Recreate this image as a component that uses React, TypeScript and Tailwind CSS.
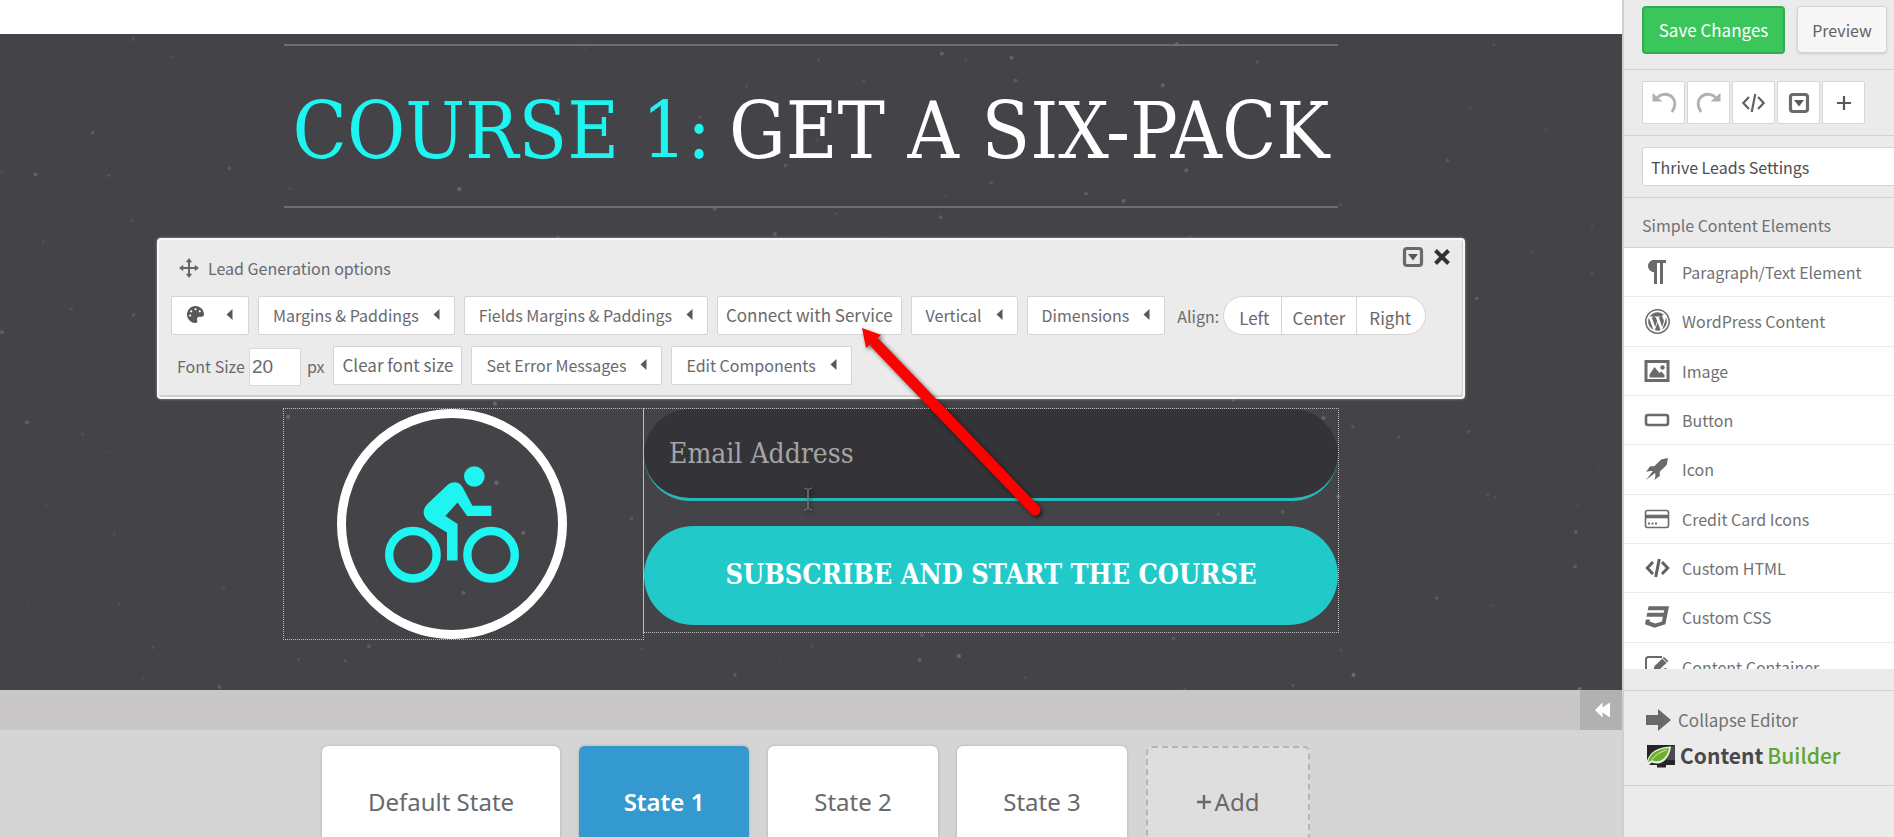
import type { ReactNode } from "react";
import { FaPalette } from "react-icons/fa";
import { ImCss3, ImPilcrow, ImRocket, ImWordpress } from "react-icons/im";

const SPECKS = Array.from({ length: 230 }, (_, i) => {
  const a = Math.abs(Math.sin(i * 12.9898) * 43758.5453) % 1;
  const b = Math.abs(Math.sin(i * 78.233) * 12345.6789) % 1;
  const c = Math.abs(Math.sin(i * 37.719) * 9876.5432) % 1;
  return { x: a * 100, y: b * 100, r: 0.8 + c * 1.4, o: 0.04 + c * c * 0.16 };
});

function Specks() {
  return (
    <svg className="absolute inset-0 h-full w-full" aria-hidden="true">
      {SPECKS.map((s, i) => (
        <circle key={i} cx={`${s.x}%`} cy={`${s.y}%`} r={s.r} fill="#fff" opacity={s.o} />
      ))}
    </svg>
  );
}

function CaretLeft() {
  return (
    <svg width="7" height="11" viewBox="0 0 7 11" fill="#58585a" aria-hidden="true">
      <path d="M6.5 0v11L0.5 5.5z" />
    </svg>
  );
}

function BoxedArrow() {
  return (
    <svg width="22" height="22" viewBox="0 0 22 22" aria-hidden="true">
      <rect x="2.5" y="2.5" width="17" height="17" rx="2.5" fill="none" stroke="#6a6a6c" strokeWidth="3.2" />
      <path d="M6 8h10l-5 6.5z" fill="#58585a" />
    </svg>
  );
}

function UndoIcon({ flip = false }: { flip?: boolean }) {
  return (
    <svg width="26" height="24" viewBox="0 0 26 24" className={flip ? "-scale-x-100" : ""} aria-hidden="true">
      <path d="M5 8C9 2.5 17 1.5 21.5 6.5C24.5 10 24.5 15.500 21 21" fill="none" stroke="#b0b0b0" strokeWidth="2.800" />
      <path d="M1.500 2v8.500h10z" fill="#b0b0b0" />
    </svg>
  );
}

function CodeIcon({ bold = false }: { bold?: boolean }) {
  return (
    <svg width="25" height="20" viewBox="0 0 24 20" fill="none" stroke="#626264" strokeWidth={bold ? 3 : 2.2} aria-hidden="true">
      <path d="M7.500 4L1.800 10L7.500 16M16.500 4L22.200 10L16.500 16M13.800 1L10.200 19" />
    </svg>
  );
}

function MoveIcon() {
  return (
    <svg width="20" height="20" viewBox="0 0 20 20" aria-hidden="true">
      <path d="M10 3v14M3 10h14" stroke="#666" strokeWidth="2" />
      <path d="M10 0l3.200 4.200H6.800zM10 20l3.200-4.200H6.800zM0 10l4.200-3.200v6.400zM20 10l-4.200-3.200v6.400z" fill="#666" />
    </svg>
  );
}

function ImageIcon() {
  return (
    <svg width="26" height="22" viewBox="0 0 26 22" aria-hidden="true">
      <rect x="2" y="1.500" width="22" height="19" fill="none" stroke="#6a6a6c" strokeWidth="3" />
      <path d="M5.500 17.500v-3L10.500 7l5 6 2-1.500 3 3.500v2.500z" fill="#6a6a6c" />
      <circle cx="18.500" cy="7.500" r="2.200" fill="#6a6a6c" />
    </svg>
  );
}

function ButtonIcon() {
  return (
    <svg width="26" height="14" viewBox="0 0 26 14" aria-hidden="true">
      <rect x="2" y="2" width="22" height="10" rx="2" fill="none" stroke="#6a6a6c" strokeWidth="2.600" />
    </svg>
  );
}

function CardIcon() {
  return (
    <svg width="26" height="20" viewBox="0 0 26 20" aria-hidden="true">
      <rect x="1.500" y="1.500" width="23" height="17" rx="2" fill="none" stroke="#6a6a6c" strokeWidth="1.600" />
      <path d="M1.500 7.500h23" stroke="#6a6a6c" strokeWidth="3.600" />
      <path d="M4 14.500h2M7.500 14.500h2M11 14.500h2" stroke="#6a6a6c" strokeWidth="2" />
    </svg>
  );
}

function ContainerIcon() {
  return (
    <svg width="26" height="24" viewBox="0 0 26 24" fill="none" aria-hidden="true">
      <path d="M18 2H4.500C3 2 2 3 2 4.500V19C2 20.500 3 21.500 4.500 21.500H19C20.500 21.500 21.500 20.500 21.500 19V13" stroke="#6a6a6c" strokeWidth="2" />
      <path d="M9 16.500l1.500-5.500L20 2l4.500 4L15 15z" fill="#6a6a6c" />
      <path d="M18.500 3.500l4.300 4" stroke="#fff" strokeWidth="1" />
    </svg>
  );
}

function LeafLogo() {
  return (
    <svg width="30" height="24" viewBox="0 0 30 24" aria-hidden="true">
      <path d="M1 1h28v20h-9v2.500h-9V21H1z" fill="#262427" />
      <path d="M23 2h6v14h-8z" fill="#4b4a4e" />
      <path d="M0 21.500C2 10 8 3.500 25 2.500C23.500 15.500 15 22.500 5.500 18.500L1.500 22.500z" fill="#e9f2df" />
      <path d="M2 18C4 9.500 10.500 5 23 4C21.500 14 14 19.500 6 16.500z" fill="#6bb02f" />
      <path d="M4.500 17.500C9 11 14 8 20.500 6" fill="none" stroke="#d7ecc4" strokeWidth="1" />
    </svg>
  );
}

function Cyclist() {
  return (
    <svg className="w-[134px]" viewBox="0 -0.5 24 24" fill="#1ef5f1" role="img" aria-label="Cyclist">
      <circle cx="16" cy="3" r="1.850" />
      <path d="M19.050 8.250V10.050H14.700L13 7.650L10.800 10.050L13 11.500V18.050H11.100V13L7.900 11.100C6.700 10.300 6.600 8.900 7.600 7.900L11.100 4.600C12.100 3.700 13.300 3.900 13.900 4.900L15.650 8.250Z" />
      <circle cx="5" cy="17" r="4.250" fill="none" stroke="#1ef5f1" strokeWidth="1.500" />
      <circle cx="19" cy="17" r="4.250" fill="none" stroke="#1ef5f1" strokeWidth="1.500" />
    </svg>
  );
}

function PanelButton({ children, caret = true }: { children: ReactNode; caret?: boolean }) {
  return (
    <button
      type="button"
      className={`flex h-[39px] items-center gap-[14px] whitespace-nowrap rounded-[2px] border border-[#d4d4d4] bg-white pb-[2px] ${
        caret ? "px-[14px] text-[16px]" : "px-[8px] text-[17px]"
      }`}
    >
      {children}
      {caret && <CaretLeft />}
    </button>
  );
}

function OptionsPanel() {
  return (
    <section className="mx-auto mt-[30px] h-[161px] w-full max-w-[1308px] rounded-[4px] border-2 border-[#f8f8f8] bg-[#ebebeb] px-3 text-[#69696b] shadow-[inset_-1px_-2px_1px_#cfcfcf,0_0_3px_#999]">
      <header className="flex h-[56px] items-start justify-between">
        <h2 className="flex items-center gap-[9px] pt-[16px] pl-[8px] text-[16px] leading-[24px]">
          <MoveIcon />
          Lead Generation options
        </h2>
        <div className="flex items-center gap-[9px] pt-[6px]">
          <button type="button" aria-label="Collapse options">
            <BoxedArrow />
          </button>
          <button type="button" aria-label="Close options">
            <svg width="18" height="18" viewBox="0 0 18 18" stroke="#333335" strokeWidth="4" aria-hidden="true">
              <path d="M2.500 2.500l13 13M15.500 2.500l-13 13" />
            </svg>
          </button>
        </div>
      </header>
      <div className="flex items-center gap-[9px]">
        <button
          type="button"
          aria-label="Colors"
          className="flex h-[39px] w-[78px] items-center justify-center gap-[22px] rounded-[2px] border border-[#d4d4d4] bg-white pb-[2px]"
        >
          <FaPalette size={17} color="#58585a" />
          <CaretLeft />
        </button>
        <PanelButton>Margins &amp; Paddings</PanelButton>
        <PanelButton>Fields Margins &amp; Paddings</PanelButton>
        <PanelButton caret={false}>Connect with Service</PanelButton>
        <PanelButton>Vertical</PanelButton>
        <PanelButton>Dimensions</PanelButton>
        <div className="flex items-center gap-1 pl-[3px] text-[16px]">
          <span>Align:</span>
          <div className="flex h-[39px] divide-x divide-[#d4d4d4] overflow-hidden rounded-full border border-[#d4d4d4] bg-white text-[17px]">
            <button type="button" className="pt-1 pr-[11px] pl-[15px]">Left</button>
            <button type="button" className="px-[11px] pt-1">Center</button>
            <button type="button" className="pt-1 pr-[14px] pl-[12px]">Right</button>
          </div>
        </div>
      </div>
      <div className="mt-[10px] flex items-center gap-[9px]">
        <div className="flex items-center gap-1 pl-[6px] text-[16px]">
          <label htmlFor="font-size">Font Size</label>
          <input
            id="font-size"
            defaultValue="20"
            className="mt-[3px] h-[38px] w-[52px] border border-[#d9d9d9] bg-white px-[2px] font-['Liberation_Sans',sans-serif] text-[19px]"
          />
          <span className="pl-[2px]">px</span>
        </div>
        <PanelButton caret={false}>Clear font size</PanelButton>
        <PanelButton>Set Error Messages</PanelButton>
        <PanelButton>Edit Components</PanelButton>
      </div>
    </section>
  );
}

function OptInForm() {
  return (
    <form className="mx-auto mt-[9px] flex w-full max-w-[1056px] items-start font-['DejaVu_Serif_Condensed','DejaVu_Serif',serif]">
      <div className="flex h-[232px] w-[361px] shrink-0 items-center justify-center border border-dotted border-[#bdbdbd] pr-[24px]">
        <div className="flex h-[230px] w-[230px] items-center justify-center rounded-full border-[9px] border-white">
          <Cyclist />
        </div>
      </div>
      <div className="-ml-[1px] flex h-[225px] flex-1 flex-col border border-dotted border-[#bdbdbd]">
        <input
          type="email"
          aria-label="Email Address"
          placeholder="Email Address"
          className="h-[92px] w-full rounded-[46px] border-b-[3px] border-[#26b8b8] bg-[#343338] px-[25px] text-[28px] placeholder:text-[#a5a4a5]"
        />
        <button
          type="submit"
          className="mt-[25px] h-[99px] w-full rounded-[50px] bg-[#21cac9] text-[27px] font-bold text-white"
        >
          SUBSCRIBE AND START THE COURSE
        </button>
      </div>
    </form>
  );
}

const stateTab =
  "h-[112px] rounded-[6px] text-[24px] font-['Noto_Sans',sans-serif] shadow-[0_0_3px_#aaa]";

function StatesBar() {
  return (
    <footer className="h-[147px] shrink-0 overflow-hidden bg-[#d5d5d5]">
      <div className="flex h-[40px] justify-end bg-[#c9c7c8]">
        <button type="button" aria-label="Hide states" className="flex w-[42px] items-center justify-center bg-[#b1b1b1] pl-[2px]">
          <svg width="15" height="16" viewBox="0 0 15 16" fill="#fff" aria-hidden="true">
            <path d="M7.500 0.500v5L15 0.500v15L7.500 10.500v5L0 8z" />
          </svg>
        </button>
      </div>
      <nav className="mx-auto mt-4 flex max-w-[998px] gap-[19px] pl-[10px] text-[#69696b]">
        <button type="button" className={`${stateTab} w-[238px] bg-white`}>Default State</button>
        <button type="button" className={`${stateTab} w-[170px] bg-[#3499ce] font-semibold text-white`}>State 1</button>
        <button type="button" className={`${stateTab} w-[170px] bg-white`}>State 2</button>
        <button type="button" className={`${stateTab} w-[170px] bg-white`}>State 3</button>
        <button
          type="button"
          className="flex h-[112px] w-[164px] items-center justify-center gap-1 rounded-[6px] border-2 border-dashed border-[#b5b5b5] bg-[#dedede] font-['Noto_Sans',sans-serif] text-[24px]"
        >
          <svg width="14" height="14" viewBox="0 0 14 14" stroke="#69696b" strokeWidth="2.400" aria-hidden="true">
            <path d="M7 0v14M0 7h14" />
          </svg>
          Add
        </button>
      </nav>
    </footer>
  );
}

const elements = [
  { label: "Paragraph/Text Element", icon: <ImPilcrow size={24} /> },
  { label: "WordPress Content", icon: <ImWordpress size={25} /> },
  { label: "Image", icon: <ImageIcon /> },
  { label: "Button", icon: <ButtonIcon /> },
  { label: "Icon", icon: <ImRocket size={22} /> },
  { label: "Credit Card Icons", icon: <CardIcon /> },
  { label: "Custom HTML", icon: <CodeIcon bold /> },
  { label: "Custom CSS", icon: <ImCss3 size={24} /> },
  { label: "Content Container", icon: <ContainerIcon /> },
];

const toolButton =
  "flex h-[43px] w-[43px] items-center justify-center rounded-[2px] border border-[#d6d6d6] bg-white";

function Sidebar() {
  return (
    <aside className="flex w-[272px] shrink-0 flex-col overflow-hidden border-l-2 border-[#cfcfcf] bg-[#ebebeb] text-[16px] text-[#717173]">
      <div className="flex h-[70px] shrink-0 items-start gap-[12px] border-b border-[#d2d2d2] pt-[6px] pl-[18px]">
        <button type="button" className="h-[48px] w-[143px] rounded-[4px] border-2 border-[#33ab50] bg-[#3bc65c] text-[17px] text-white">
          Save Changes
        </button>
        <button type="button" className="h-[47px] w-[90px] rounded-[4px] border border-[#d4d4d4] bg-[#f7f7f7] text-[#626264] shadow-sm">
          Preview
        </button>
      </div>
      <div className="flex h-[66px] shrink-0 items-center gap-[2px] border-b border-[#d2d2d2] pl-[18px]">
        <button type="button" aria-label="Undo" className={toolButton}><UndoIcon /></button>
        <button type="button" aria-label="Redo" className={toolButton}><UndoIcon flip /></button>
        <button type="button" aria-label="HTML" className={toolButton}><CodeIcon /></button>
        <button type="button" aria-label="Menu" className={toolButton}><BoxedArrow /></button>
        <button type="button" aria-label="Add" className={toolButton}>
          <svg width="14" height="14" viewBox="0 0 14 14" stroke="#58585a" strokeWidth="2.200" aria-hidden="true">
            <path d="M7 0v14M0 7h14" />
          </svg>
        </button>
      </div>
      <div className="flex h-[62px] shrink-0 items-center border-b border-[#d2d2d2] pl-[18px]">
        <select
          aria-label="Thrive Leads Settings"
          className="h-[39px] w-[270px] shrink-0 appearance-none rounded-[3px] border border-[#d4d4d4] bg-white px-2 text-[16px] text-[#4d4d4f]"
        >
          <option>Thrive Leads Settings</option>
        </select>
      </div>
      <h3 className="flex h-[50px] shrink-0 items-center border-b border-[#d2d2d2] pt-1 pl-[18px]">
        Simple Content Elements
      </h3>
      <div className="h-[421px] shrink-0 overflow-hidden">
        <ul className="grid h-[444px] grid-rows-9 bg-white">
          {elements.map((el) => (
            <li key={el.label} className="border-b border-[#ececec]">
              <button type="button" className="flex h-full w-full items-center gap-[12px] pl-5">
                <span className="flex w-[26px] justify-center text-[#6a6a6c]">{el.icon}</span>
                {el.label}
              </button>
            </li>
          ))}
        </ul>
      </div>
      <div className="mt-[21px] flex h-[96px] shrink-0 flex-col gap-2 border-y border-[#d2d2d2] pt-[14px] pl-[22px]">
        <button type="button" className="flex h-[30px] items-center gap-[7px] text-[17px]">
          <svg width="25" height="24" viewBox="0 0 25 24" fill="#6a6a6c" aria-hidden="true">
            <path d="M0 7h12V1l13 11-13 11v-6H0z" />
          </svg>
          Collapse Editor
        </button>
        <div className="flex h-[26px] items-center gap-1 text-[21px]">
          <LeafLogo />
          <span className="font-bold text-[#48484c]">
            Content<span className="pl-1 font-medium text-[#5fa531]">Builder</span>
          </span>
        </div>
      </div>
    </aside>
  );
}

export default function App() {
  return (
    <div className="relative flex h-screen overflow-hidden bg-white font-['Noto_Sans_CJK_SC','Noto_Sans',sans-serif]">
      <div className="flex min-w-0 flex-1 flex-col">
        <div className="h-[34px] shrink-0 bg-white" />
        <main className="relative min-h-0 flex-1 overflow-hidden bg-[#444348]">
          <Specks />
          <div className="relative">
            <h1 className="mx-auto mt-[10px] flex h-[164px] max-w-[1054px] items-center justify-center gap-[18px] whitespace-nowrap border-y-2 border-[#6d6c71] pt-[10px] font-['DejaVu_Serif_Condensed','DejaVu_Serif',serif] text-[79px] text-white">
              <span className="text-[#1ef5f1]">COURSE 1:</span>
              <span>GET A SIX-PACK</span>
            </h1>
            <OptionsPanel />
            <OptInForm />
          </div>
        </main>
        <StatesBar />
      </div>
      <Sidebar />
      {/* pointer from the form up to "Connect with Service" */}
      <svg className="pointer-events-none absolute top-[320px] left-[800px] drop-shadow-[2px_2px_2px_rgba(0,0,0,0.6)]" width="250" height="200" aria-hidden="true">
        <path d="M76 24L235 190" stroke="#fe0000" strokeWidth="11" strokeLinecap="round" />
        <path d="M62 8L81 15L66 28z" fill="#fe0000" />
        <path d="M4 168q4 0 4 3v16q0 3-4 3M12 168q-4 0-4 3v16q0 3 4 3" fill="none" stroke="#777" strokeWidth="1" />
      </svg>
    </div>
  );
}
